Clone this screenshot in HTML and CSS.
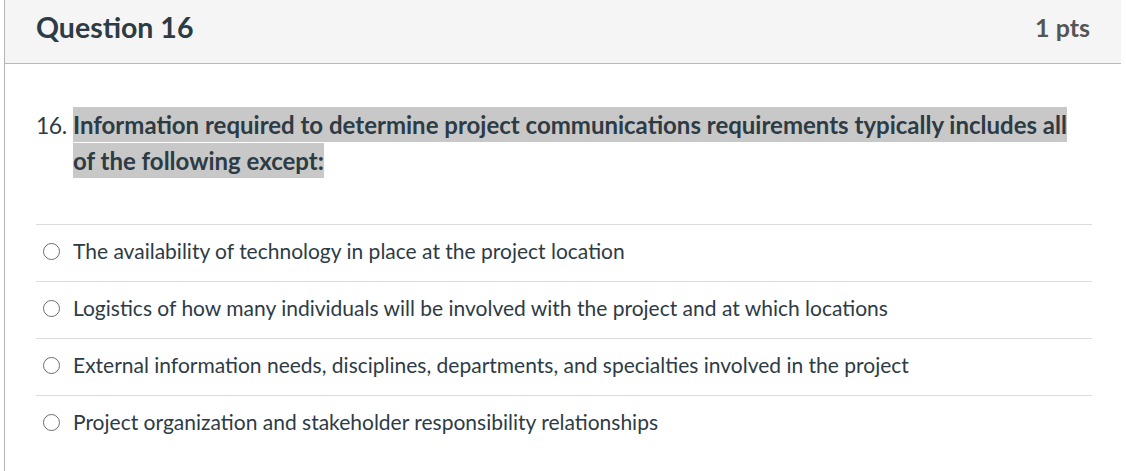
FILE: index.html
```html
<!DOCTYPE html>
<html lang="en">
<head>
<meta charset="utf-8">
<title>Question 16</title>
<link rel="stylesheet" href="styles.css">
</head>
<body>
<div class="quiz">
  <div class="question">
    <div class="header">
      <h2 class="title">Question 16</h2>
      <div class="pts">1 pts</div>
    </div>
    <div class="content">
      <div class="prompt">
        <span class="num">16.</span>
        <div class="text"><span class="sel">Information required to determine project communications requirements typically includes all of the following except:</span></div>
      </div>
      <div class="answers">
        <label class="answer"><span class="radio"></span><span class="label">The availability of technology in place at the project location</span></label>
        <label class="answer"><span class="radio"></span><span class="label">Logistics of how many individuals will be involved with the project and at which locations</span></label>
        <label class="answer"><span class="radio"></span><span class="label">External information needs, disciplines, departments, and specialties involved in the project</span></label>
        <label class="answer"><span class="radio"></span><span class="label">Project organization and stakeholder responsibility relationships</span></label>
      </div>
    </div>
  </div>
</div>
</body>
</html>
```
FILE: styles.css
```css
html, body {
  margin: 0;
  padding: 0;
  background: #ffffff;
}
body {
  font-family: Lato, "Open Sans", "Liberation Sans", sans-serif;
  color: #2d3b45;
}
.quiz {
  padding-left: 4px;
}
.question {
  width: 1117px;
  border-left: 1px solid #b4b4b4;
  min-height: 471px;
  box-sizing: border-box;
}
.header {
  background: #f5f5f5;
  border-bottom: 1px solid #b9b9b9;
  display: flex;
  align-items: center;
  justify-content: space-between;
  padding: 0 31px 9px 31px;
  box-sizing: border-box;
  height: 64px;
}
.title {
  margin: 0;
  font-size: 28.5px;
  font-weight: 700;
  color: #2d3b45;
}
.pts {
  font-size: 25px;
  font-weight: 700;
  color: #555555;
}
.content {
  padding: 43px 29px 0 31px;
}
.prompt {
  display: flex;
  align-items: baseline;
  font-size: 24px;
  line-height: 35.5px;
}
.num {
  width: 37px;
  flex: none;
  font-size: 23px;
  letter-spacing: -0.5px;
}
.text {
  flex: 1;
  font-weight: 700;
  padding-right: 20px;
}
.sel {
  background: #c8c8c8;
  padding: 3px 0;
}
.answers {
  margin-top: 46px;
}
.answer {
  display: flex;
  align-items: center;
  border-top: 1px solid #dcdcdc;
  font-size: 21px;
  padding-bottom: 6px;
  box-sizing: border-box;
  height: 57px;
}
.radio {
  width: 15px;
  height: 15px;
  border: 1.5px solid #6d6d6d;
  border-radius: 50%;
  margin: 3px 13px 0 7px;
  flex: none;
}
.label {
  color: #2d3b45;
}
```
